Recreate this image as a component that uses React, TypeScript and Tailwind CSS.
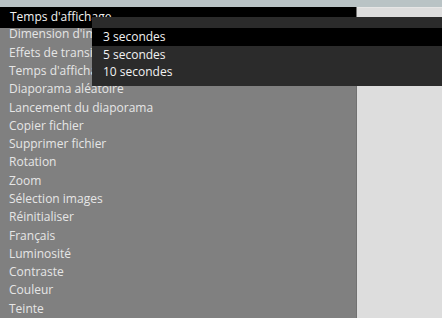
import React from "react";

const items = [
  "Dimension d'image",
  "Effets de transition",
  "Temps d'affichage",
  "Diaporama aléatoire",
  "Lancement du diaporama",
  "Copier fichier",
  "Supprimer fichier",
  "Rotation",
  "Zoom",
  "Sélection images",
  "Réinitialiser",
  "Français",
  "Luminosité",
  "Contraste",
  "Couleur",
  "Teinte",
];

export default function App() {
  return (
    <div
      className="relative w-[442px] h-[318px] overflow-hidden bg-[#dddddd] flex flex-col text-[12px]"
      style={{ fontFamily: '"Open Sans", "Noto Sans", sans-serif' }}
    >
      <div className="h-[7px] shrink-0 bg-[#b9c3c5]" />
      <div className="flex flex-1 min-h-0">
        <div className="w-[357px] bg-[#808080] border-r border-[#727272] flex flex-col">
          <div className="h-[21px] mb-[-2.7px] bg-black text-[#f2f2f2] pl-[10px] pt-[1.3px] leading-[18.3px] whitespace-nowrap">
            Temps d'affichage
          </div>
          {items.map((t) => (
            <div
              key={t}
              className="relative h-[18.3px] leading-[18.3px] pl-[9px] text-[#e6e6e6] whitespace-nowrap"
            >
              {t}
            </div>
          ))}
        </div>
        <div className="flex-1 bg-[#dddddd] border-t border-[#e6e6e6]" />
      </div>
      <div className="absolute left-[92px] top-[17px] right-0 h-[69px] bg-[#2b2b2b] pt-[11px] text-[#f2f2f2]">
        <div className="h-[17.5px] leading-[17.5px] bg-black pl-[11px]">3 secondes</div>
        <div className="h-[17.5px] leading-[17.5px] pl-[11px]">5 secondes</div>
        <div className="h-[17.5px] leading-[17.5px] pl-[11px]">10 secondes</div>
      </div>
    </div>
  );
}
